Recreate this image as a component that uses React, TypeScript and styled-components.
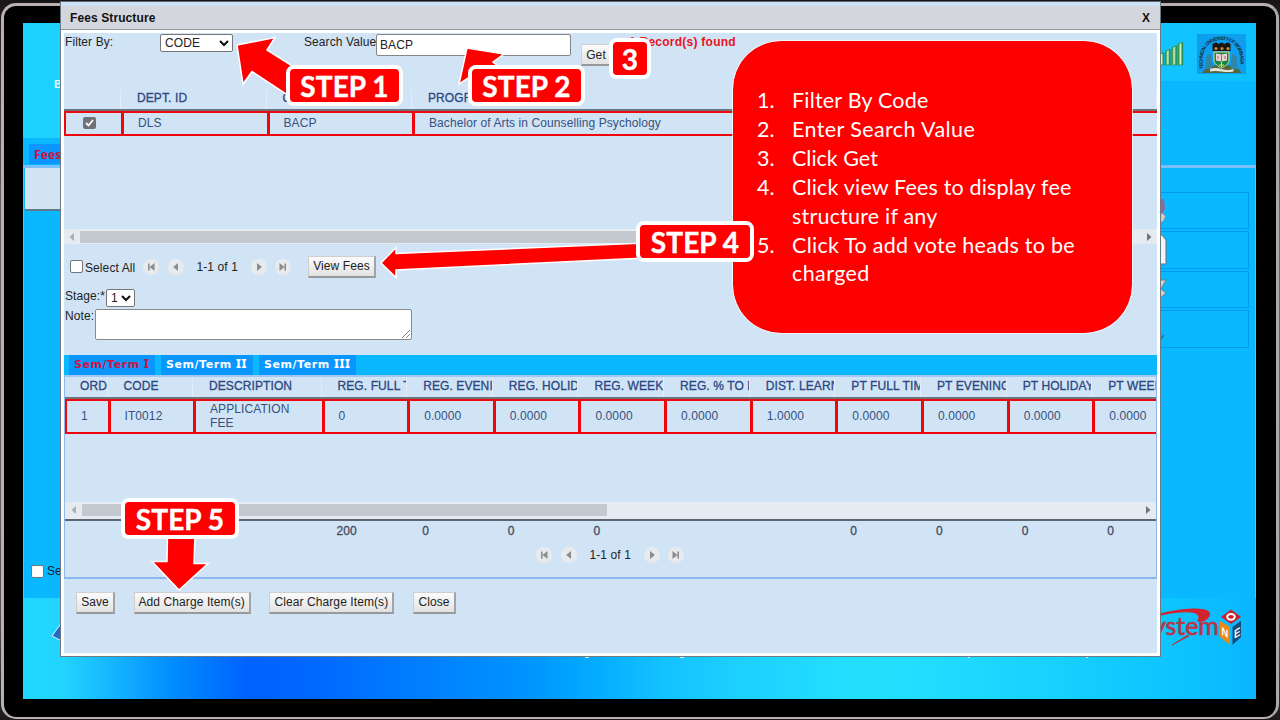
import React from "react";
import styled, { createGlobalStyle, css } from "styled-components";

const sky = "#0ab8ff";
const pale = "#d1e4f5";
const red = "#ff0000";

const GlobalStyle = createGlobalStyle`
  * { box-sizing: border-box; }
  body { margin: 0; background: #111; }
  button, input, select, textarea { font: inherit; letter-spacing: inherit; }
`;

const Monitor = styled.div`
  position: relative;
  width: 1280px;
  height: 720px;
  overflow: hidden;
  background: linear-gradient(#161414, #2a2424 4%, #6b6462 30%, #5c5655 85%, #1c1a1a);
  padding: 3px 1px 1px 1px;
  font: 12px/14px "Liberation Sans", Arial, sans-serif;
  letter-spacing: 0.09px;
  color: #222;
`;

const Bezel = styled.div`
  height: 100%;
  padding: 17px 20px 17px 19px;
  background: #000;
  border: 3px solid #b9b1b0;
  border-right-color: #aaa8aa;
  border-bottom-width: 2px;
  border-radius: 15px;
`;

const Desktop = styled.div`
  display: flex;
  flex-direction: column;
  height: 676px;
  background: ${sky};
`;

const Banner = styled.header`
  display: flex;
  justify-content: space-between;
  height: 115px;
`;

const BannerLeft = styled.div`
  width: 620px;
  padding: 54px 0 0 31px;
  background: linear-gradient(90deg, #1ed2ff, #14c0ff);
  color: #e8fbff;
  font: bold 11px/14px "Liberation Sans", Arial, sans-serif;
`;

const BannerRight = styled.div`
  display: flex;
  justify-content: flex-end;
  width: 300px;
  height: 58px;
  padding: 11px 10px 0 0;
  gap: 13px;
  background: linear-gradient(90deg, #18cbff, #0fc0ff);
`;

const PageTabs = styled.nav`
  height: 27px;
  padding: 6px 0 0 6px;
`;

const PageTab = styled.div`
  width: 90px;
  height: 20px;
  padding: 3px 5px;
  background: #0a95ff;
  color: #d0103a;
  font: bold 12px/16px "Noto Sans", Verdana, sans-serif;
`;

const Workspace = styled.main`
  display: flex;
  flex-direction: column;
  flex: 1;
  border: 1px solid #6fb9f4;
  border-top: 3px solid #7cc0fb;
  border-bottom: 0;
`;

const WorkspaceTop = styled.div`
  display: flex;
  justify-content: space-between;
  flex: 1;
`;

const SideCard = styled.div`
  width: 110px;
  height: 43px;
  margin-left: 1px;
  background: #d2e3f3;
  border-bottom: 2px solid #5d7888;
`;

const ToolList = styled.div`
  display: flex;
  flex-direction: column;
  gap: 2px;
  width: 170px;
  padding: 24px 6px 0 0;
`;

const ToolBox = styled.div`
  display: flex;
  align-items: center;
  height: 37.4px;
  padding-left: 63px;
  border: 1px solid #0099f0;
`;

const SelectLine = styled.label`
  display: flex;
  align-items: center;
  gap: 3px;
  height: 20px;
  margin: 0 0 17px 7px;
  color: #123;
`;

const Footer = styled.footer`
  display: flex;
  justify-content: space-between;
  height: 101px;
  padding-right: 15px;
  background: linear-gradient(90deg, #20d9ff 0, #22d4ff 40px, #10a8ff 110px, #008cff 150px, #0062ff 225px,
    #0068ff 290px, #007cff 385px, #0093ff 500px, #00a4ff 550px, #14c2ff 640px, #1ccfff 710px,
    #24e0ff 830px, #22ddff 900px, #18d2ff 1020px, #0dc4ff 1150px, #0ab5ff 1234px);
`;

const Dialog = styled.section`
  position: absolute;
  left: 60px;
  top: 1px;
  width: 1101px;
  height: 656px;
  display: flex;
  flex-direction: column;
  background: #fff;
  border: 1px solid #6d7a84;
  border-top: 1px solid #5f6670;
`;

const TitleBar = styled.header`
  display: flex;
  align-items: center;
  justify-content: space-between;
  height: 28px;
  padding: 0 10px 0 9px;
  border-top: 4px solid #cfe1f6;
  border-bottom: 1px solid #979ba0;
  background: #d4d6dd;
  color: #111;
  font-weight: bold;
  letter-spacing: 0.1px;
`;

const Body = styled.div`
  display: flex;
  flex-direction: column;
  flex: 1;
  margin: 3px 3px 3px 3px;
  background: ${pale};
`;

const FilterRow = styled.div`
  display: flex;
  align-items: flex-start;
  height: 56px;
  padding: 1px 0 0 1px;
`;

const Label = styled.span<{ $w: number; $top?: number; $ml?: number }>`
  width: ${(p) => p.$w}px;
  flex: none;
  margin-left: ${(p) => p.$ml ?? 0}px;
  padding-top: ${(p) => p.$top ?? 1}px;
  white-space: nowrap;
`;

const Picker = styled.div<{ $w: number; $h?: number }>`
  display: flex;
  align-items: center;
  justify-content: space-between;
  width: ${(p) => p.$w}px;
  height: ${(p) => p.$h ?? 18}px;
  padding: 0 3px 0 4px;
  background: #fff;
  border: 1px solid #767676;
  border-radius: 2px;
  flex: none;
`;

const SearchBox = styled.input`
  width: 195px;
  height: 22px;
  padding: 0 3px;
  margin-left: -1px;
  border: 1px solid #858585;
  border-radius: 2px;
  background: #fff;
  color: #222;
  outline: none;
`;

const Button = styled.button<{ $w: number; $mt?: number; $ml?: number }>`
  width: ${(p) => p.$w}px;
  height: 22px;
  margin: ${(p) => p.$mt ?? 0}px 0 0 ${(p) => p.$ml ?? 0}px;
  padding: 0;
  flex: none;
  border: 1px solid #cfcfcf;
  border-right: 2px solid #a2a3a5;
  border-bottom: 2px solid #97989a;
  background: linear-gradient(#fbfbfb, #e2e2e2);
  color: #222;
  white-space: nowrap;
`;

const Found = styled.b`
  margin-left: 17px;
  padding-top: 1px;
  color: #e8131c;
  white-space: nowrap;
  letter-spacing: 0.25px;
`;

const HeadRow = styled.div<{ $cols: string; $h: number }>`
  display: grid;
  grid-template-columns: ${(p) => p.$cols};
  height: ${(p) => p.$h}px;
  overflow: hidden;
  border-bottom: 2px solid #6b7780;
  color: #2c4782;
  -webkit-text-stroke: 0.3px #2c4782;
`;

const HeadCell = styled.div<{ $first?: boolean }>`
  display: flex;
  align-items: center;
  overflow: hidden;
  padding: 0 0 2px ${(p) => (p.$first ? 15 : 16)}px;
  white-space: nowrap;
  letter-spacing: 0.1px;
  border-right: 1px solid #e2ecf6;
`;

const DataRow = styled.div<{ $cols: string; $h: number }>`
  display: grid;
  grid-template-columns: ${(p) => p.$cols};
  height: ${(p) => p.$h}px;
  overflow: hidden;
  color: #36507f;
`;

const DataCell = styled.div<{ $center?: boolean }>`
  display: flex;
  align-items: center;
  padding: 0 0 1px 14px;
  white-space: nowrap;
  border: solid #f0070b;
  border-width: 2px 0 2px 3px;
  ${(p) =>
    p.$center &&
    css`
      padding-left: 17px;
    `}
  &:first-child {
    border-left-width: 2px;
  }
`;

const Ticked = styled.span`
  display: flex;
  width: 13px;
  height: 12px;
  border-radius: 2px;
  background: #6f7276;
`;

const Tick = styled.span`
  width: 13px;
  height: 13px;
  flex: none;
  border: 1px solid #70777d;
  border-radius: 2px;
  background: #fff;
`;

const Track = styled.div<{ $pad: number; $h: number; $bottom?: number }>`
  display: flex;
  align-items: center;
  height: ${(p) => p.$h}px;
  padding: 0 5px ${(p) => p.$bottom ?? 0}px ${(p) => p.$pad}px;
  background: #e6ebf2;
`;

const Thumb = styled.div<{ $w: number }>`
  width: ${(p) => p.$w}px;
  height: 12px;
  margin-left: 6px;
  background: #c4c9cf;
`;

const Spacer = styled.div`
  flex: 1;
`;

const PagerRow = styled.div`
  display: flex;
  align-items: center;
  height: 45px;
  padding-left: 6px;
`;

const Pager = styled.div`
  display: flex;
  align-items: center;
`;

const Round = styled.span<{ $ml?: number }>`
  display: flex;
  width: 16px;
  height: 16px;
  margin-left: ${(p) => p.$ml ?? 0}px;
  border-radius: 50%;
  background: #e8ebee;
`;

const PagerText = styled.span`
  width: 41px;
  margin: 0 13px 0 13px;
  white-space: nowrap;
`;

const FormRow = styled.div<{ $h: number }>`
  display: flex;
  align-items: flex-start;
  height: ${(p) => p.$h}px;
  padding-left: 1px;
`;

const NoteArea = styled.div`
  display: flex;
  align-items: flex-end;
  justify-content: flex-end;
  width: 317px;
  height: 31px;
  border: 1px solid #8a8a8a;
  border-radius: 2px;
  background: #fff;
`;

const TermTabs = styled.nav`
  display: flex;
  gap: 6px;
  height: 20px;
  padding-left: 5px;
  background: ${sky};
`;

const TermTab = styled.div<{ $w: number; $active?: boolean }>`
  width: ${(p) => p.$w}px;
  padding: 1px 0 0 5px;
  background: #0a96ff;
  color: ${(p) => (p.$active ? "#cf1240" : "#fff")};
  font: bold 11px/15px "DejaVu Sans", Verdana, sans-serif;
  letter-spacing: 0.55px;
  white-space: nowrap;
`;

const Numeral = styled.span`
  font-family: "Noto Sans", sans-serif;
  font-weight: 800;
  font-size: 12px;
`;

const TermPanel = styled.div`
  display: flex;
  flex-direction: column;
  height: 204px;
  border: 1px solid #8fb9ea;
  border-top: 2px solid #a3c7ee;
  border-bottom: 2px solid #8bb7ec;
`;

const Totals = styled.div<{ $cols: string }>`
  display: grid;
  grid-template-columns: ${(p) => p.$cols};
  height: 24px;
  padding-top: 3px;
  border-top: 2px solid #5b6672;
  overflow: hidden;
  color: #444b60;
  -webkit-text-stroke: 0.3px #444b60;
`;

const Total = styled.span`
  padding-left: 15px;
`;

const Centered = styled.div`
  display: flex;
  align-items: center;
  height: 34px;
  padding: 0 0 10px 471px;
`;

const Actions = styled.div`
  display: flex;
  align-items: flex-start;
  gap: 18.7px;
  height: 74px;
  padding: 12.5px 0 0 12px;
`;

const Callout = styled.aside`
  position: absolute;
  left: 733px;
  top: 41px;
  width: 399px;
  height: 292px;
  padding: 45px 20px 0 24px;
  border-radius: 48px;
  background: ${red};
  outline: 1px solid rgba(255, 255, 255, 0.7);
  color: #fff;
  font: 21.5px/28.9px Lato, Calibri, sans-serif;
`;

const Step = styled.div`
  display: grid;
  grid-template-columns: 35px 1fr;
`;

const StepLine = styled.span<{ $ls?: number }>`
  display: block;
  white-space: nowrap;
  letter-spacing: ${(p) => p.$ls ?? 0}px;
`;

const Badge = styled.div<{ $x: number; $y: number; $w?: number }>`
  position: absolute;
  left: ${(p) => p.$x}px;
  top: ${(p) => p.$y}px;
  display: flex;
  align-items: center;
  justify-content: center;
  width: ${(p) => p.$w ?? 117}px;
  height: 41px;
  border: 4px solid #fff;
  border-radius: 8px;
  background: ${red};
  color: #fff;
  font: bold 28px/34px Lato, Calibri, sans-serif;
  -webkit-text-stroke: 0.4px #fff;
  white-space: nowrap;
`;

const ArrowLayer = styled.svg`
  position: absolute;
  left: 0;
  top: 0;
  pointer-events: none;
`;

const Chevron = () => (
  <svg width="10" height="8" viewBox="0 0 10 8">
    <path d="M1 2l4 4 4-4" fill="none" stroke="#111" strokeWidth="2" />
  </svg>
);

const icons = {
  first: "M5 4.500h1.600v7H5zM11.500 4v8L6.600 8z",
  prev: "M10 4v8L5.200 8z",
  next: "M6 4v8l5-4z",
  last: "M9.400 4.500H11v7H9.400zM4.500 4v8L9.400 8z",
};

const PageButton = ({ kind, ml }: { kind: keyof typeof icons; ml?: number }) => (
  <Round $ml={ml}>
    <svg width="16" height="16">
      <path d={icons[kind]} fill="#8b8c8e" />
    </svg>
  </Round>
);

const PagerControls = () => (
  <Pager>
    <PageButton kind="first" />
    <PageButton kind="prev" ml={8.5} />
    <PagerText>1-1 of 1</PagerText>
    <PageButton kind="next" />
    <PageButton kind="last" ml={8.5} />
  </Pager>
);

const ScrollArrow = ({ right }: { right?: boolean }) => (
  <svg width="5" height="8">
    <path d={right ? "M0 0l4.5 4L0 8z" : "M5 0L.5 4 5 8z"} fill={right ? "#70757a" : "#a9afb6"} />
  </svg>
);

const Signal = () => (
  <svg width="44" height="34" viewBox="0 0 44 34">
    <defs>
      <linearGradient id="bar">
        <stop offset="0" stopColor="#1c8a3a" />
        <stop offset=".5" stopColor="#d3f5c2" />
        <stop offset="1" stopColor="#0d7430" />
      </linearGradient>
    </defs>
    {[0, 1, 2, 3, 4].map((i) => (
      <path
        key={i}
        d={`M${13 + i * 6.3} ${24 - i * 3.5}l4.500-1.800V31h-4.500z`}
        fill="url(#bar)"
        stroke="#2c8a4a"
        strokeWidth=".8"
      />
    ))}
  </svg>
);

const Crest = () => (
  <svg width="49" height="40" viewBox="0 0 49 40">
    <rect width="49" height="40" fill="#0d9eee" />
    <path id="arc" d="M5 35C1 14 12 4.500 24.500 4.500S48 14 44 35" fill="none" />
    <text fontSize="5" fontWeight="bold" fill="#15324a" fontFamily="Liberation Sans" dy="1.500">
      <textPath href="#arc" textLength="80">TECHNICAL UNIVERSITY OF MOMBASA</textPath>
    </text>
    <path d="M5 39c3-7 13-8 19.500-8s17 1 20 8z" fill="#55663a" />
    <path d="M9 35c-1-5 1-7 0-12 2-3 4-4 5-2 0 5 2 8 1 14zM40 35c1-5-1-7 0-12-2-3-4-4-5-2 0 5-2 8-1 14z" fill="#2f86a8" />
    <path d="M15.500 10q4-3 6 0 3-3 6 0 3-3 6 0v7h-18z" fill="#1d150f" />
    <circle cx="19" cy="14.500" r="1.600" fill="#c58b3c" />
    <circle cx="25" cy="14.500" r="1.600" fill="#c58b3c" />
    <circle cx="31" cy="14.500" r="1.600" fill="#c58b3c" />
    <path d="M17 18h15v8c0 4-4 6-7.500 8C21 32 17 30 17 26z" fill="#168443" stroke="#d9dd9a" />
    <path d="M19 19.500l5.500 1 5.500-1v7l-5.500 1-5.500-1z" fill="#ecd3d3" />
    <path d="M24.500 20.500v7M21 22v3M28 22v3" stroke="#a66" />
    <path d="M24.500 28v5M22 31h5" stroke="#e8e25a" />
    <path d="M13 35q5-2 11.500 0t12 0v2.500q-6 1-12 0t-11.500 0z" fill="#e6e3d7" />
  </svg>
);

const SystemLogo = () => (
  <svg width="100" height="60" viewBox="0 0 100 60">
    <path d="M8 19Q30 11 52 10.500Q70 10 69 17Q67 23 59 24L56 23Q61 16 50 14.500Q32 13 8 21z" fill="#d3232f" />
    <path d="M31 47l15-9.500 2 .5z" fill="#b8313f" stroke="#b8313f" strokeWidth=".8" />
    <text x="12" y="37" fontSize="25" fontFamily="Lato" fill="#b93648" stroke="#b93648" strokeWidth=".7" textLength="66">
      ystem
    </text>
    <path d="M80 19l10-7.500L100 19l-10 7z" fill="#c9202a" />
    <path d="M79 23l10 6v18l-10-8z" fill="#ee8a13" />
    <path d="M91.500 29l9.500-7v16l-9.500 9z" fill="#154a78" />
    <ellipse cx="90" cy="18.800" rx="3.800" ry="2.900" fill="none" stroke="#fff" strokeWidth="2" />
    <text transform="matrix(.85 .45 0 1 80.500 36.500)" fontSize="11" fontWeight="bold" fontFamily="Liberation Sans" fill="#fff">N</text>
    <text transform="matrix(.8 -.5 0 1 93 41)" fontSize="12" fontWeight="bold" fontFamily="Liberation Sans" fill="#fff">E</text>
  </svg>
);

const deptCols = "57px 145.500px 145.500px 1fr";
const feeCols = "42.500px 85.500px 128.500px repeat(10, 85.650px)";
const feeHeads = [
  "ORD", "CODE", "DESCRIPTION", "REG. FULL TIME", "REG. EVENING", "REG. HOLIDAY", "REG. WEEKEND",
  "REG. % TO PAY", "DIST. LEARNING", "PT FULL TIME", "PT EVENING", "PT HOLIDAY", "PT WEEKEND",
];
const feeValues = ["0", "0.0000", "0.0000", "0.0000", "0.0000", "1.0000", "0.0000", "0.0000", "0.0000", "0.0000"];
const totals = ["200", "0", "0", "0", "", "", "0", "0", "0", "0"];

const Background = () => (
  <Bezel>
    <Desktop>
      <Banner>
        <BannerLeft>BACK</BannerLeft>
        <BannerRight>
          <Signal />
          <Crest />
        </BannerRight>
      </Banner>
      <PageTabs>
        <PageTab>Fees</PageTab>
      </PageTabs>
      <Workspace>
        <WorkspaceTop>
          <SideCard />
          <ToolList>
            <ToolBox>
              <svg width="18" height="24"><path d="M0 0h15l1 10-3 5H0z" fill="#8b6a9a" /><path d="M0 18l13-4 4 3-3 6H0z" fill="#c9cdd0" stroke="#75808a" strokeWidth=".7" /></svg>
            </ToolBox>
            <ToolBox>
              <svg width="18" height="30"><path d="M0 0h13l4 5v24H0z" fill="#f3f4f4" stroke="#66717a" /></svg>
            </ToolBox>
            <ToolBox>
              <svg width="18" height="22"><path d="M0 2h17l-5 9 5 4-7 6H0z" fill="#d0d2d2" stroke="#7d7876" /></svg>
            </ToolBox>
            <ToolBox>
              <svg width="16" height="24"><path d="M10 24l5-6" stroke="#2a7fae" strokeWidth="2" /></svg>
            </ToolBox>
          </ToolList>
        </WorkspaceTop>
        <SelectLine><Tick />Select All</SelectLine>
      </Workspace>
      <Footer>
        <svg width="1080" height="101">
          <path d="M29 38l10-14h10v24z" fill="#1e6fc4" stroke="#dcefff" />
          <path d="M562 59.500h4M657 59.500h4M945 59.500h2M1063 59.500h2" stroke="#dff6ff" />
        </svg>
        <SystemLogo />
      </Footer>
    </Desktop>
  </Bezel>
);

const FeesDialog = () => (
  <Dialog>
    <TitleBar>
      <span>Fees Structure</span>
      <span>X</span>
    </TitleBar>
    <Body>
      <FilterRow>
        <Label $w={95}>Filter By:</Label>
        <Picker $w={73}>CODE <Chevron /></Picker>
        <Label $w={73} $ml={71}>Search Value</Label>
        <SearchBox defaultValue="BACP" />
        <Button $w={31} $mt={10} $ml={10}>Get</Button>
        <Found>1 Record(s) found</Found>
      </FilterRow>
      <HeadRow $cols={deptCols} $h={22}>
        <HeadCell $first />
        <HeadCell>DEPT. ID</HeadCell>
        <HeadCell>CODE</HeadCell>
        <HeadCell>PROGRAMME</HeadCell>
      </HeadRow>
      <DataRow $cols={deptCols} $h={25}>
        <DataCell $center>
          <Ticked>
            <svg width="13" height="12">
              <path d="M3 6l2.500 2.500 4.500-5.500" fill="none" stroke="#fff" strokeWidth="1.800" />
            </svg>
          </Ticked>
        </DataCell>
        <DataCell>DLS</DataCell>
        <DataCell>BACP</DataCell>
        <DataCell>Bachelor of Arts in Counselling Psychology</DataCell>
      </DataRow>
      <Spacer />
      <Track $pad={5} $h={15}>
        <ScrollArrow />
        <Thumb $w={900} />
        <Spacer />
        <ScrollArrow right />
      </Track>
      <PagerRow>
        <Tick />
        <Label $w={58} $top={3} $ml={2}>Select All</Label>
        <PagerControls />
        <Button $w={68} $ml={17}>View Fees</Button>
      </PagerRow>
      <FormRow $h={20}>
        <Label $w={41} $top={0}>Stage:*</Label>
        <Picker $w={29}>1 <Chevron /></Picker>
      </FormRow>
      <FormRow $h={46}>
        <Label $w={30} $top={0}>Note:</Label>
        <NoteArea>
          <svg width="10" height="10"><path d="M1 9l8-8M5 9l4-4" stroke="#888" /></svg>
        </NoteArea>
      </FormRow>
      <TermTabs>
        <TermTab $w={86} $active>Sem/Term <Numeral>I</Numeral></TermTab>
        <TermTab $w={92}>Sem/Term <Numeral>II</Numeral></TermTab>
        <TermTab $w={97}>Sem/Term <Numeral>III</Numeral></TermTab>
      </TermTabs>
      <TermPanel>
        <HeadRow $cols={feeCols} $h={22}>
          {feeHeads.map((h, i) => (
            <HeadCell key={h} $first={i === 0}>{h}</HeadCell>
          ))}
        </HeadRow>
        <DataRow $cols={feeCols} $h={35}>
          <DataCell>1</DataCell>
          <DataCell>IT0012</DataCell>
          <DataCell>APPLICATION<br />FEE</DataCell>
          {feeValues.map((v, i) => (
            <DataCell key={i}>{v}</DataCell>
          ))}
        </DataRow>
        <Spacer />
        <Track $pad={6} $h={17} $bottom={2}>
          <ScrollArrow />
          <Thumb $w={525} />
          <Spacer />
          <ScrollArrow right />
        </Track>
        <Totals $cols={feeCols}>
          <Total /><Total /><Total />
          {totals.map((v, i) => (
            <Total key={i}>{v}</Total>
          ))}
        </Totals>
        <Centered><PagerControls /></Centered>
      </TermPanel>
      <Actions>
        <Button $w={39}>Save</Button>
        <Button $w={117}>Add Charge Item(s)</Button>
        <Button $w={125}>Clear Charge Item(s)</Button>
        <Button $w={43}>Close</Button>
      </Actions>
    </Body>
  </Dialog>
);

const steps: [string, number][][] = [
  [["Filter By Code", 0.2]],
  [["Enter Search Value", 0.4]],
  [["Click Get", 0]],
  [["Click view Fees to display fee", 0.17], ["structure if any", 0.2]],
  [["Click To add vote heads to be", 0.27], ["charged", 0.4]],
];

export default function App() {
  return (
    <Monitor>
      <GlobalStyle />
      <Background />
      <FeesDialog />
      <Callout>
        {steps.map((lines, i) => (
          <Step key={i}>
            <span>{i + 1}.</span>
            <div>
              {lines.map(([t, ls]) => (
                <StepLine key={t} $ls={ls}>{t}</StepLine>
              ))}
            </div>
          </Step>
        ))}
      </Callout>
      <ArrowLayer width="1280" height="720">
        <g fill={red} stroke="#fff" strokeWidth="1.500">
          <path d="M237 45L275 37.500 267 50 305 74 292 98 252 71.500 243 84z" />
          <path d="M459 84L467 48 504 54 493 62 510 76 490 86 474 74z" />
          <path d="M381 263L396 247.500V253.500L645 243V258L396 270V277.500z" />
          <path d="M167.500 535H195L194 563.500H208L179 590 152 561.500H167z" />
        </g>
      </ArrowLayer>
      <Badge $x={286} $y={65}>STEP 1</Badge>
      <Badge $x={468} $y={65}>STEP 2</Badge>
      <Badge $x={609} $y={38} $w={42}>3</Badge>
      <Badge $x={636} $y={221} $w={118}>STEP 4</Badge>
      <Badge $x={121} $y={498} $w={118}>STEP 5</Badge>
    </Monitor>
  );
}
